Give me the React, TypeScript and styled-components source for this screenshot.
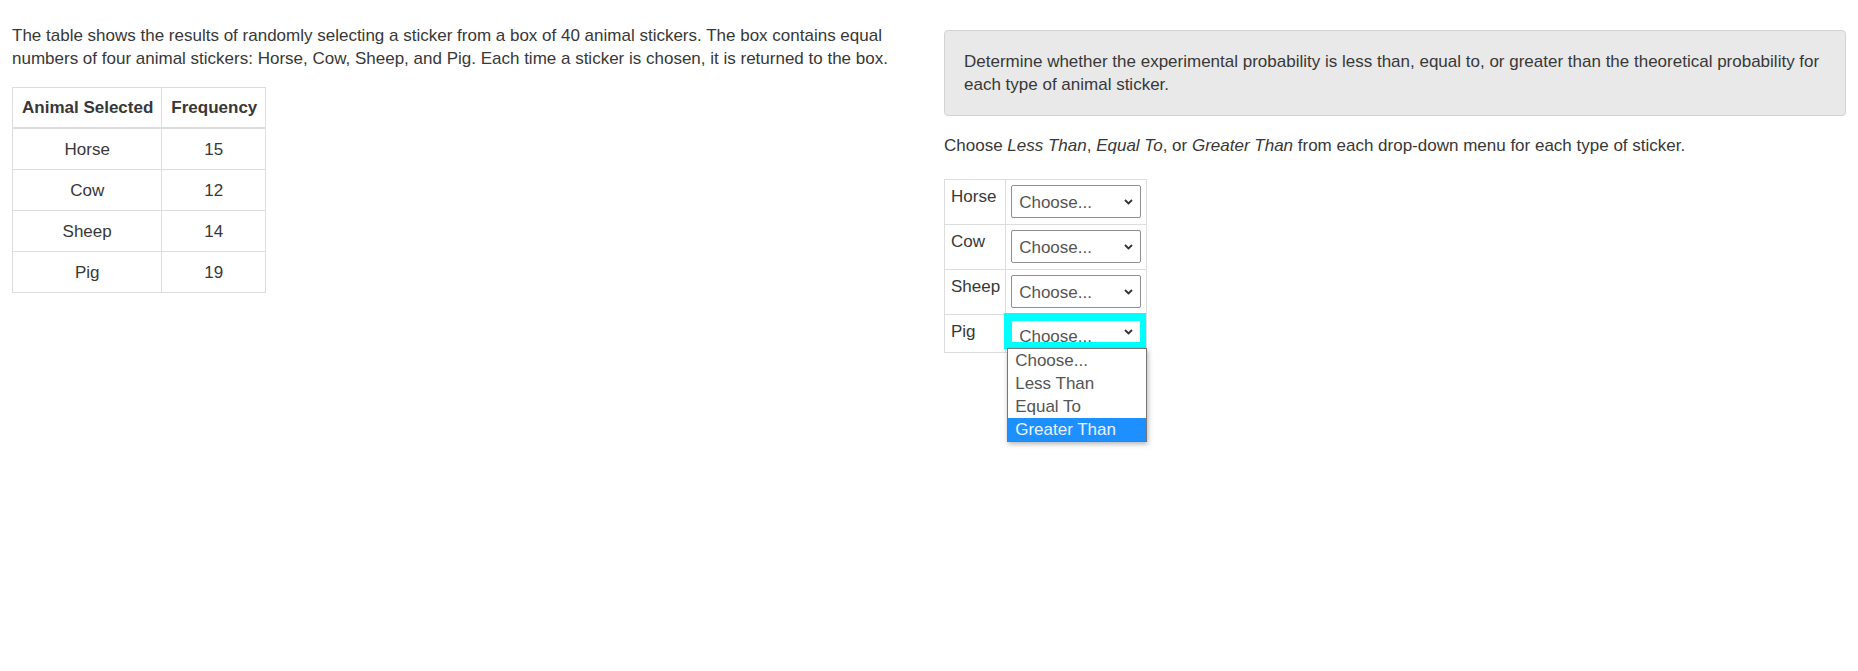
import React from "react";
import styled, { createGlobalStyle } from "styled-components";

const Global = createGlobalStyle`
  html, body { margin: 0; padding: 0; background: #fff; }
  body {
    font-family: "Liberation Sans", Arial, sans-serif;
    font-size: 17px;
    line-height: 23px;
    color: #383838;
  }
  * { box-sizing: border-box; }
`;

const Page = styled.div`
  display: grid;
  grid-template-columns: 1fr 1fr;
  column-gap: 30px;
  padding: 24px 12px 0 12px;
  width: 1858px;
  height: 671px;
  align-items: start;
`;

const Column = styled.div<{ $top?: number }>`
  display: flex;
  flex-direction: column;
  align-items: flex-start;
  padding-top: ${(p) => p.$top ?? 0}px;
`;

const Para = styled.p<{ $mb?: number }>`
  margin: 0 0 ${(p) => p.$mb ?? 17}px 0;
`;

const DataTable = styled.table`
  border-collapse: collapse;
  border: 1px solid #ddd;
`;

const Th = styled.th`
  border: 1px solid #ddd;
  border-bottom: 2px solid #ddd;
  padding: 8px 8px 8px 9px;
  font-weight: bold;
  text-align: left;
`;

const Td = styled.td`
  border: 1px solid #ddd;
  padding: 9px 8px 8px;
  text-align: center;
`;

const Well = styled.div`
  align-self: stretch;
  background: #e9e9e9;
  border: 1px solid #d3d3d3;
  border-radius: 4px;
  padding: 19px;
  margin-bottom: 18px;
`;

const ChoiceTable = styled.table`
  border-collapse: collapse;
  border: 1px solid #ddd;
  margin-top: 4px;
`;

const ChoiceRow = styled.tr<{ $h: number }>`
  height: ${(p) => p.$h}px;
`;

const LabelCell = styled.td`
  border: 1px solid #ddd;
  padding: 5px 5px 5px 6px;
  vertical-align: top;
`;

const SelectCell = styled.td`
  border: 1px solid #ddd;
  padding: 5px 5px 0 5px;
  vertical-align: top;
  position: relative;
`;

const FakeSelect = styled.div`
  position: relative;
  width: 130px;
  height: 33px;
  border: 1px solid #8f8f8f;
  border-radius: 2px;
  background: #fff;
  color: #555;
  padding: 5px 0 0 7px;
  overflow: hidden;
`;

const FocusRing = styled.div`
  display: block;
  width: 142px;
  background: #00ffff;
  padding: 8px 6px 7px 8px;
  margin: -7px -5px 0 -7px;
`;

const FocusedSelect = styled.div`
  position: relative;
  width: 128px;
  height: 21px;
  background: #fff;
  color: #555;
  padding: 4px 0 0 7px;
  overflow: hidden;
  line-height: 23px;
`;

const Chevron = styled.svg`
  position: absolute;
  right: 7px;
  top: 50%;
  margin-top: -3px;
  width: 9px;
  height: 6px;
`;

const Menu = styled.ul`
  position: absolute;
  left: 1px;
  top: 33px;
  width: 140px;
  margin: 0;
  padding: 0;
  list-style: none;
  background: #fff;
  border: 1px solid #767676;
  box-shadow: 1px 2px 5px rgba(0, 0, 0, 0.3);
  z-index: 2;
`;

const MenuItem = styled.li<{ $active?: boolean }>`
  height: 23px;
  line-height: 23px;
  padding-left: 7px;
  color: ${(p) => (p.$active ? "#eaf4ff" : "#555")};
  background: ${(p) => (p.$active ? "#1e8fff" : "transparent")};
`;

const Em = styled.em`
  font-style: italic;
`;

const ChevronIcon = () => (
  <Chevron viewBox="0 0 9 6">
    <path d="M1 1 L4.5 4.5 L8 1" fill="none" stroke="#333" strokeWidth="1.8" />
  </Chevron>
);

const rows: [string, number][] = [
  ["Horse", 15],
  ["Cow", 12],
  ["Sheep", 14],
  ["Pig", 19],
];

export default function App() {
  return (
    <>
      <Global />
      <Page>
        <Column>
          <Para>
            The table shows the results of randomly selecting a sticker from a box of 40 animal stickers. The box
            contains equal numbers of four animal stickers: Horse, Cow, Sheep, and Pig. Each time a sticker is chosen,
            it is returned to the box.
          </Para>
          <DataTable>
            <thead>
              <tr>
                <Th>Animal Selected</Th>
                <Th>Frequency</Th>
              </tr>
            </thead>
            <tbody>
              {rows.map(([a, f]) => (
                <tr key={a}>
                  <Td>{a}</Td>
                  <Td>{f}</Td>
                </tr>
              ))}
            </tbody>
          </DataTable>
        </Column>
        <Column $top={6}>
          <Well>
            Determine whether the experimental probability is less than, equal to, or greater than the theoretical
            probability for each type of animal sticker.
          </Well>
          <Para $mb={18}>
            Choose <Em>Less Than</Em>, <Em>Equal To</Em>, or <Em>Greater Than</Em> from each drop-down menu for each
            type of sticker.
          </Para>
          <ChoiceTable>
            <tbody>
              {rows.map(([a]) => {
                const focused = a === "Pig";
                return (
                  <ChoiceRow key={a} $h={focused ? 38 : 45}>
                    <LabelCell>{a}</LabelCell>
                    <SelectCell>
                      {focused ? (
                        <>
                          <FocusRing>
                            <FocusedSelect>
                              Choose...
                              <ChevronIcon />
                            </FocusedSelect>
                          </FocusRing>
                          <Menu>
                            <MenuItem>Choose...</MenuItem>
                            <MenuItem>Less Than</MenuItem>
                            <MenuItem>Equal To</MenuItem>
                            <MenuItem $active>Greater Than</MenuItem>
                          </Menu>
                        </>
                      ) : (
                        <FakeSelect>
                          Choose...
                          <ChevronIcon />
                        </FakeSelect>
                      )}
                    </SelectCell>
                  </ChoiceRow>
                );
              })}
            </tbody>
          </ChoiceTable>
        </Column>
      </Page>
    </>
  );
}
